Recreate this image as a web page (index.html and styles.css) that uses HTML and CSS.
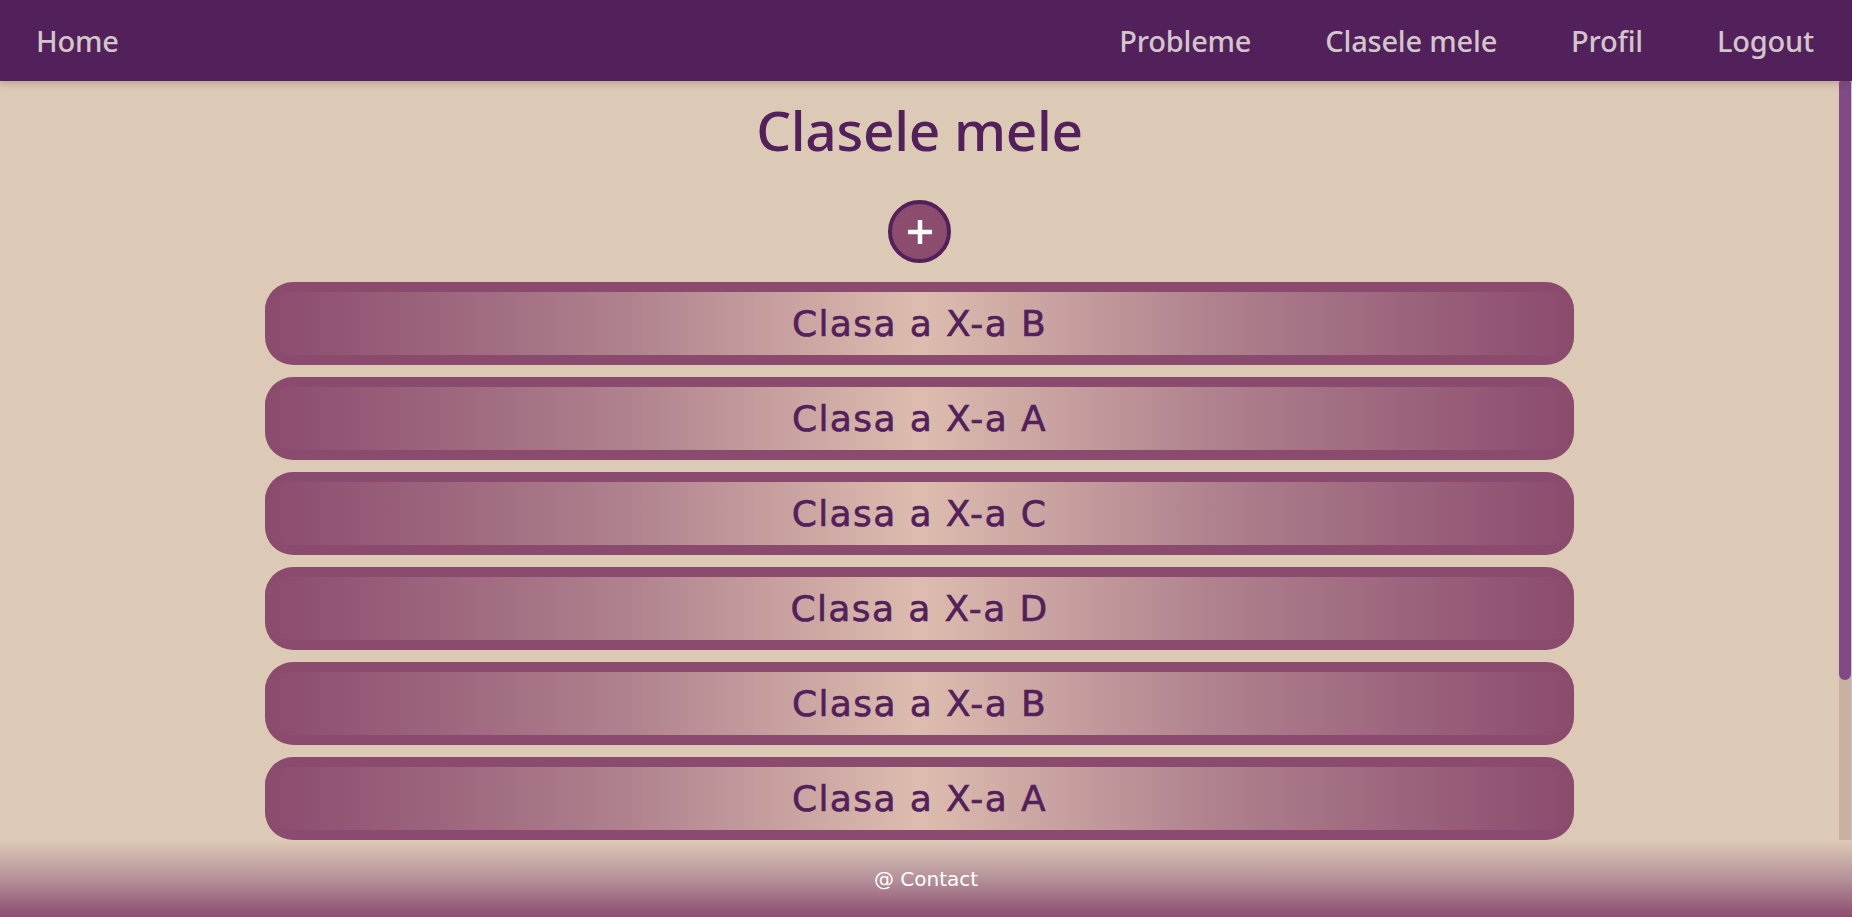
FILE: index.html
```html
<!DOCTYPE html>
<html lang="ro">
<head>
<meta charset="utf-8">
<title>Clasele mele</title>
<link rel="stylesheet" href="styles.css">
</head>
<body>
<header class="topbar">
  <a class="nav-link" href="#">Home</a>
  <nav class="nav-right">
    <a class="nav-link" href="#">Probleme</a>
    <a class="nav-link" href="#">Clasele mele</a>
    <a class="nav-link" href="#">Profil</a>
    <a class="nav-link" href="#">Logout</a>
  </nav>
</header>
<div class="main-wrap">
  <main class="content">
    <h1 class="page-title">Clasele mele</h1>
    <button class="add-btn" type="button" aria-label="Adaugă clasă">
      <svg width="30" height="30" viewBox="0 0 30 30"><path d="M15 3v24M3 15h24" stroke="#fff" stroke-width="4.5" fill="none"/></svg>
    </button>
    <div class="class-list">
      <div class="class-card">Clasa a X-a B</div>
      <div class="class-card">Clasa a X-a A</div>
      <div class="class-card">Clasa a X-a C</div>
      <div class="class-card">Clasa a X-a D</div>
      <div class="class-card">Clasa a X-a B</div>
      <div class="class-card">Clasa a X-a A</div>
    </div>
  </main>
  <div class="scrollbar"><div class="scroll-thumb"></div></div>
</div>
<footer class="footer">
  <a class="footer-link" href="#">@ Contact</a>
</footer>
</body>
</html>
```
FILE: styles.css
```css
html, body {
  margin: 0;
  height: 100%;
}
body {
  display: flex;
  flex-direction: column;
  background: #ddcab6;
  font-family: "Noto Sans", "Open Sans", sans-serif;
  overflow: hidden;
}
.topbar {
  flex: 0 0 81px;
  display: flex;
  align-items: center;
  justify-content: space-between;
  padding: 0 38px 0 36px;
  background: #52205a;
  box-shadow: 0 3px 7px rgba(90, 60, 40, 0.25);
  position: relative;
  z-index: 2;
}
.nav-right {
  display: flex;
  gap: 74px;
}
.nav-link {
  color: #d2c6cb;
  text-decoration: none;
  font-size: 29px;
  font-weight: 500;
  letter-spacing: -0.2px;
}
.main-wrap {
  flex: 1 1 auto;
  display: flex;
  min-height: 0;
}
.content {
  flex: 1 1 auto;
  overflow: hidden;
  display: flex;
  flex-direction: column;
  align-items: center;
}
.scrollbar {
  flex: 0 0 12px;
  background: #c9b0a2;
  border-right: 1px solid #cbc3d0;
}
.scroll-thumb {
  height: 599px;
  background: #7f4a85;
  border-radius: 2px 2px 6px 6px;
}
.page-title {
  margin: 16px 0 0;
  font-size: 55px;
  line-height: 66px;
  font-weight: 500;
  color: #52205a;
  letter-spacing: -0.3px;
}
.add-btn {
  margin-top: 37px;
  width: 63px;
  height: 63px;
  flex: 0 0 63px;
  border-radius: 50%;
  border: 4px solid #52205a;
  background: #8c4c6e;
  display: flex;
  align-items: center;
  justify-content: center;
  padding: 0;
  cursor: pointer;
}
.class-list {
  margin-top: 19px;
  width: 1309px;
  display: flex;
  flex-direction: column;
  gap: 12px;
}
.class-card {
  box-sizing: border-box;
  height: 83px;
  border-top: 10px solid #8b4b6e;
  border-bottom: 10px solid #8b4b6e;
  border-radius: 28px;
  background: linear-gradient(to right, #8b4b6e 0%, #b0828e 28%, #ddbdaf 50%, #b0828e 72%, #8b4b6e 100%);
  display: flex;
  align-items: center;
  justify-content: center;
  color: #52205a;
  font-family: "DejaVu Sans", sans-serif;
  font-size: 36px;
  letter-spacing: 1.4px;
  -webkit-text-stroke: 0.6px #52205a;
}
.footer {
  flex: 0 0 77px;
  display: flex;
  align-items: center;
  justify-content: center;
  background: linear-gradient(to bottom, #ddcab6 0%, #b5929a 50%, #8c4c6e 100%);
}
.footer-link {
  color: #ffffff;
  text-decoration: none;
  font-family: "DejaVu Sans", sans-serif;
  font-size: 20px;
}
```
